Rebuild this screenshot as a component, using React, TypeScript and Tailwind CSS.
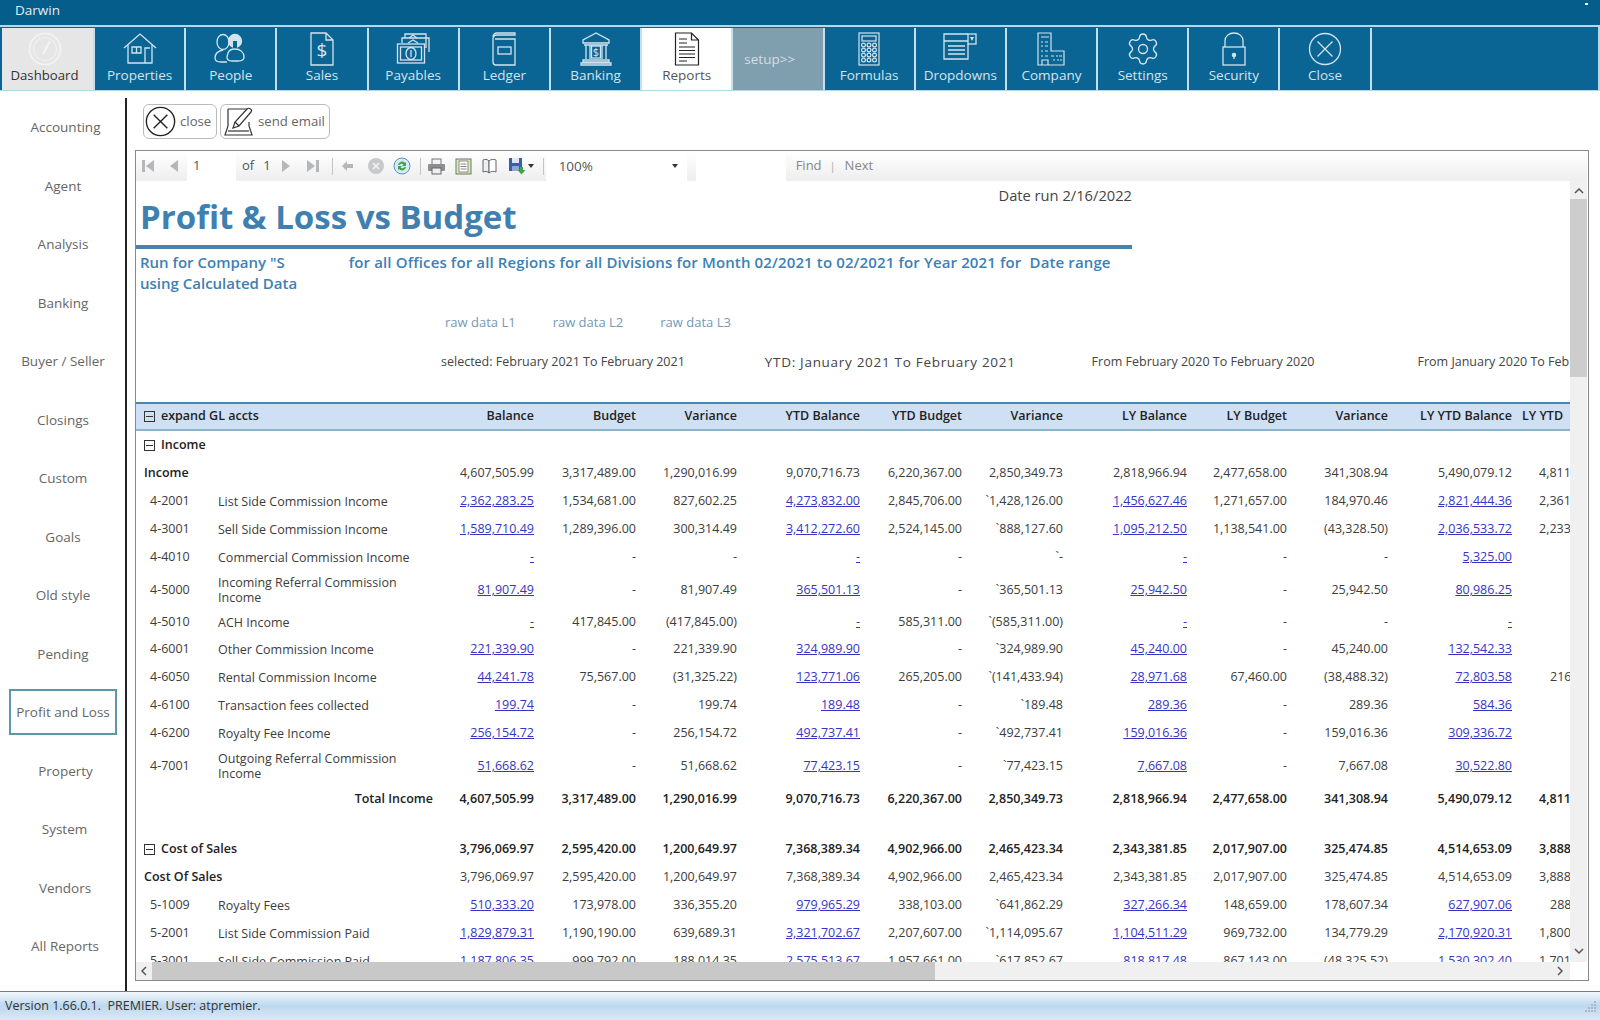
import { ReactNode } from "react";
import { Settings } from "lucide-react";

const font = "font-['Open_Sans',sans-serif]";

const sideItems = [
  { label: "Accounting", cls: "pl-[5px]" },
  { label: "Agent", cls: "" },
  { label: "Analysis", cls: "" },
  { label: "Banking", cls: "" },
  { label: "Buyer / Seller", cls: "" },
  { label: "Closings", cls: "" },
  { label: "Custom", cls: "" },
  { label: "Goals", cls: "" },
  { label: "Old style", cls: "" },
  { label: "Pending", cls: "" },
  { label: "Profit and Loss", cls: "" },
  { label: "Property", cls: "pl-[5px]" },
  { label: "System", cls: "pl-[3px]" },
  { label: "Vendors", cls: "pl-[4px]" },
  { label: "All Reports", cls: "pl-[4px]" },
];

const HouseIcon = () => (
  <svg width="36" height="32" viewBox="0 0 36 32" fill="none" stroke="currentColor" strokeWidth="1.3">
    <path d="M2 15 18 1l16 14" />
    <path d="M6 12v18h24V12" />
    <path d="M10 14h9v6h-9z M23 30V15h5" />
    <path d="M14.5 14v6" />
  </svg>
);

const PeopleIcon = () => (
  <svg width="36" height="32" viewBox="0 0 36 32" fill="none" stroke="currentColor" strokeWidth="1.3">
    <ellipse cx="10" cy="9" rx="6" ry="7.5" />
    <path d="M10 17c-5 1-8 4-8 8 0 3 3 4 6 4h6" />
    <circle cx="22" cy="8" r="6.5" fill="currentColor" />
    <path d="M20 8h4v10h-4z" fill="#0b6594" stroke="none" />
    <path d="M15 20c1-3 4-4 7-4 5 0 9 3 9 8 0 3-3 4-6 4h-6c-3 0-5-1-5-4z" />
  </svg>
);

const SalesIcon = () => (
  <svg width="28" height="34" viewBox="0 0 28 34" fill="none" stroke="currentColor" strokeWidth="1.3">
    <path d="M3 1h15l7 7v25H3z M18 1v7h7" />
    <text x="14" y="25" textAnchor="middle" fontSize="19" fill="currentColor" stroke="none" fontFamily="Open Sans">$</text>
  </svg>
);

const PayablesIcon = () => (
  <svg width="34" height="32" viewBox="0 0 34 32" fill="none" stroke="currentColor" strokeWidth="1.3">
    <path d="M9 5V1h21v14M6 10V5h27v14" />
    <path d="M13 5l4-3 4 3M12 10l5-3 5 3" />
    <rect x="1.5" y="11" width="27" height="19" />
    <rect x="4.5" y="14" width="21" height="13" />
    <ellipse cx="15" cy="20.5" rx="5" ry="6" />
    <path d="M15 17v7" />
  </svg>
);

const LedgerIcon = () => (
  <svg width="26" height="34" viewBox="0 0 26 34" fill="none" stroke="currentColor" strokeWidth="1.3">
    <path d="M2 5c0-3 2-4 4-4h18v2H6C3 3 2 5 2 7v23c0 2 1 3 3 3h19V7H4" />
    <rect x="7" y="15" width="13" height="7" />
  </svg>
);

const BankIcon = () => (
  <svg width="32" height="34" viewBox="0 0 32 34" fill="none" stroke="currentColor" strokeWidth="1.3">
    <path d="M16 1 3 8v3h26V8z" />
    <path d="M4 13h24 M6 13v14M10 13v14M22 13v14M26 13v14" />
    <rect x="11.5" y="14" width="9" height="12" />
    <path d="M3 28h26v2H3z M1 31h30v2H1z" />
    <text x="16" y="24" textAnchor="middle" fontSize="11" fill="currentColor" stroke="none" fontFamily="Open Sans">$</text>
  </svg>
);

const ReportIcon = () => (
  <svg width="26" height="34" viewBox="0 0 26 34" fill="none" stroke="#222" strokeWidth="1.2">
    <path d="M1.5 1h16l7 7v25h-23z M17.5 1v7h7" />
    <path d="M5 7h8M5 11h8M5 15h16M5 18.5h16M5 22h16M5 25.5h16M5 29h8" />
  </svg>
);

const CalcIcon = () => (
  <svg width="22" height="34" viewBox="0 0 22 34" fill="none" stroke="currentColor" strokeWidth="1.2">
    <rect x="1" y="1" width="20" height="32" />
    <rect x="4" y="4" width="14" height="5" />
    {[13, 18, 23, 28].map((y) =>
      [5.5, 11, 16.5].map((x) => <circle key={`${x}-${y}`} cx={x} cy={y} r="1.9" />)
    )}
  </svg>
);

const DropdownIcon = () => (
  <svg width="34" height="32" viewBox="0 0 34 32" fill="none" stroke="currentColor" strokeWidth="1.3">
    <path d="M25 1H1v25h24V11" />
    <rect x="25" y="1" width="8" height="10" />
    <path d="M27 4h4l-2 4z" fill="currentColor" stroke="none" />
    <path d="M1 8h24M5 13h17M5 17h17M5 21h17" />
  </svg>
);

const CompanyIcon = () => (
  <svg width="28" height="34" viewBox="0 0 28 34" fill="none" stroke="currentColor" strokeWidth="1.2">
    <path d="M1 33V1h13v18h13v14z" />
    <path d="M4 5h8M4 10h2m2 0h3M4 14h2m2 0h3M4 19h2m2 0h3M4 24h2m2 0h3M14 24h3m2 0h2m1 0h3M16 28h2m2 0h2m1 0h2" />
    <path d="M5 33v-5h6v5" />
  </svg>
);

const LockIcon = () => (
  <svg width="26" height="34" viewBox="0 0 26 34" fill="none" stroke="currentColor" strokeWidth="1.3">
    <path d="M4 15V9c0-5 4-8 9-8s9 3 9 8v6" />
    <rect x="2" y="15" width="22" height="18" />
    <circle cx="13" cy="23" r="1.6" fill="currentColor" />
    <path d="M13 23v4" />
  </svg>
);

const XCircleIcon = ({ size = 34, width = 1.3 }: { size?: number; width?: number }) => (
  <svg width={size} height={size} viewBox="0 0 34 34" fill="none" stroke="currentColor" strokeWidth={width}>
    <circle cx="17" cy="17" r="15.5" />
    <path d="M9.5 9.5l15 15M24.5 9.5l-15 15" />
  </svg>
);

const GaugeIcon = () => (
  <svg width="34" height="34" viewBox="0 0 34 34" fill="none" stroke="#f4f4f4" strokeWidth="1.6">
    <circle cx="17" cy="17" r="15.5" />
    <circle cx="17" cy="17" r="11.5" strokeWidth="1" />
    <path d="M15 22 22 9" strokeWidth="2" />
  </svg>
);

const tabs: { label: string; icon: ReactNode; kind?: string }[] = [
  { label: "Dashboard", icon: <GaugeIcon />, kind: "dash" },
  { label: "Properties", icon: <HouseIcon /> },
  { label: "People", icon: <PeopleIcon /> },
  { label: "Sales", icon: <SalesIcon /> },
  { label: "Payables", icon: <PayablesIcon /> },
  { label: "Ledger", icon: <LedgerIcon /> },
  { label: "Banking", icon: <BankIcon /> },
  { label: "Reports", icon: <ReportIcon />, kind: "active" },
  { label: "setup>>", icon: null, kind: "setup" },
  { label: "Formulas", icon: <CalcIcon /> },
  { label: "Dropdowns", icon: <DropdownIcon /> },
  { label: "Company", icon: <CompanyIcon /> },
  { label: "Settings", icon: <Settings size={36} strokeWidth={0.9} /> },
  { label: "Security", icon: <LockIcon /> },
  { label: "Close", icon: <XCircleIcon /> },
];

const NavTab = ({ label, icon, kind }: { label: string; icon: ReactNode; kind?: string }) => {
  if (kind === "setup") {
    return (
      <div className="w-[91.2px] h-full border-r-2 border-[#c4e0ec] bg-[#7f9fae] text-[#d4dee4] text-[13.5px] flex items-center pl-[11px]">
        {label}
      </div>
    );
  }
  const tone =
    kind === "dash"
      ? "w-[93px] bg-[#e6e6e6] text-[#333333] pr-[6px]"
      : kind === "active"
      ? "w-[91.2px] bg-white text-[#555555]"
      : "w-[91.2px] bg-[#0b6594] text-[#d3e3ec]";
  return (
    <div className={`${tone} h-full border-r-2 border-[#c4e0ec] flex flex-col items-center`}>
      <div className="h-[38px] pt-[3px] flex items-center justify-center">{icon}</div>
      <div className={`${kind === "dash" ? "text-[13.2px]" : "text-[13.5px]"} leading-[18px]`}>{label}</div>
    </div>
  );
};

type Cell = string;
type Row = {
  code?: string;
  name?: string;
  cells?: Cell[];
  last?: string;
  kind?: string;
};

// "L" up front marks a link cell
const rows: Row[] = [
  { name: "Income", kind: "section" },
  { name: "Income", kind: "group", cells: ["4,607,505.99", "3,317,489.00", "1,290,016.99", "9,070,716.73", "6,220,367.00", "2,850,349.73", "2,818,966.94", "2,477,658.00", "341,308.94", "5,490,079.12"], last: "4,811" },
  { code: "4-2001", name: "List Side Commission Income", cells: ["L2,362,283.25", "1,534,681.00", "827,602.25", "L4,273,832.00", "2,845,706.00", "`1,428,126.00", "L1,456,627.46", "1,271,657.00", "184,970.46", "L2,821,444.36"], last: "2,361" },
  { code: "4-3001", name: "Sell Side Commission Income", cells: ["L1,589,710.49", "1,289,396.00", "300,314.49", "L3,412,272.60", "2,524,145.00", "`888,127.60", "L1,095,212.50", "1,138,541.00", "(43,328.50)", "L2,036,533.72"], last: "2,233" },
  { code: "4-4010", name: "Commercial Commission Income", cells: ["L-", "-", "-", "L-", "-", "`-", "L-", "-", "-", "L5,325.00"] },
  { code: "4-5000", name: "Incoming Referral Commission Income", kind: "tall", cells: ["L81,907.49", "-", "81,907.49", "L365,501.13", "-", "`365,501.13", "L25,942.50", "-", "25,942.50", "L80,986.25"] },
  { code: "4-5010", name: "ACH Income", kind: "short", cells: ["L-", "417,845.00", "(417,845.00)", "L-", "585,311.00", "`(585,311.00)", "L-", "-", "-", "L-"] },
  { code: "4-6001", name: "Other Commission Income", cells: ["L221,339.90", "-", "221,339.90", "L324,989.90", "-", "`324,989.90", "L45,240.00", "-", "45,240.00", "L132,542.33"] },
  { code: "4-6050", name: "Rental Commission Income", cells: ["L44,241.78", "75,567.00", "(31,325.22)", "L123,771.06", "265,205.00", "`(141,433.94)", "L28,971.68", "67,460.00", "(38,488.32)", "L72,803.58"], last: "216" },
  { code: "4-6100", name: "Transaction fees collected", cells: ["L199.74", "-", "199.74", "L189.48", "-", "`189.48", "L289.36", "-", "289.36", "L584.36"] },
  { code: "4-6200", name: "Royalty Fee Income", cells: ["L256,154.72", "-", "256,154.72", "L492,737.41", "-", "`492,737.41", "L159,016.36", "-", "159,016.36", "L309,336.72"] },
  { code: "4-7001", name: "Outgoing Referral Commission Income", kind: "tall", cells: ["L51,668.62", "-", "51,668.62", "L77,423.15", "-", "`77,423.15", "L7,667.08", "-", "7,667.08", "L30,522.80"] },
  { name: "Total Income", kind: "total", cells: ["4,607,505.99", "3,317,489.00", "1,290,016.99", "9,070,716.73", "6,220,367.00", "2,850,349.73", "2,818,966.94", "2,477,658.00", "341,308.94", "5,490,079.12"], last: "4,811" },
  { kind: "spacer" },
  { name: "Cost of Sales", kind: "sectionTotal", cells: ["3,796,069.97", "2,595,420.00", "1,200,649.97", "7,368,389.34", "4,902,966.00", "2,465,423.34", "2,343,381.85", "2,017,907.00", "325,474.85", "4,514,653.09"], last: "3,888" },
  { name: "Cost Of Sales", kind: "group", cells: ["3,796,069.97", "2,595,420.00", "1,200,649.97", "7,368,389.34", "4,902,966.00", "2,465,423.34", "2,343,381.85", "2,017,907.00", "325,474.85", "4,514,653.09"], last: "3,888" },
  { code: "5-1009", name: "Royalty Fees", cells: ["L510,333.20", "173,978.00", "336,355.20", "L979,965.29", "338,103.00", "`641,862.29", "L327,266.34", "148,659.00", "178,607.34", "L627,907.06"], last: "288" },
  { code: "5-2001", name: "List Side Commission Paid", cells: ["L1,829,879.31", "1,190,190.00", "639,689.31", "L3,321,702.67", "2,207,607.00", "`1,114,095.67", "L1,104,511.29", "969,732.00", "134,779.29", "L2,170,920.31"], last: "1,800" },
  { code: "5-3001", name: "Sell Side Commission Paid", cells: ["L1,187,806.35", "999,792.00", "188,014.35", "L2,575,513.67", "1,957,661.00", "`617,852.67", "L818,817.48", "867,143.00", "(48,325.52)", "L1,530,302.40"], last: "1,701" },
];

const gridCols =
  "grid grid-cols-[82px_217px_99px_102px_101px_123px_102px_101px_124px_100px_101px_124px_100px] items-center";

const MinusBox = () => (
  <span className="w-[11px] h-[11px] border border-[#333] flex items-center justify-center shrink-0">
    <span className="w-[7px] h-px bg-[#333]" />
  </span>
);

const ValueCell = ({ value, bold }: { value: string; bold: boolean }) => {
  const isLink = value.startsWith("L");
  const text = isLink ? value.slice(1) : value;
  if (isLink) {
    return (
      <div className="text-right">
        <span className="text-[#3535c4] underline">{text}</span>
      </div>
    );
  }
  return <div className={`text-right ${bold ? "font-semibold text-[#222222]" : ""}`}>{text}</div>;
};

const ReportRow = ({ row }: { row: Row }) => {
  if (row.kind === "spacer") return <div className="h-[22px]" />;
  const bold = row.kind === "total" || row.kind === "sectionTotal";
  const height = row.kind === "tall" ? "h-[38px]" : row.kind === "short" ? "h-[26px]" : "h-[28px]";
  let label: ReactNode;
  if (row.kind === "section" || row.kind === "sectionTotal") {
    label = (
      <div className="col-span-2 flex items-center gap-[6px] pl-[8px] font-semibold text-[#222222]">
        <MinusBox />
        <span>{row.name}</span>
      </div>
    );
  } else if (row.kind === "group") {
    label = <div className="col-span-2 pl-[8px] font-semibold text-[#222222]">{row.name}</div>;
  } else if (row.kind === "total") {
    label = <div className="col-span-2 pr-[2px] text-right font-semibold text-[#222222]">{row.name}</div>;
  } else {
    label = (
      <>
        <div className="pl-[14px]">{row.code}</div>
        <div className="pr-[8px] leading-[15px]">{row.name}</div>
      </>
    );
  }
  return (
    <div className={`${gridCols} ${height}`}>
      {label}
      {row.cells?.map((c, i) => (
        <ValueCell key={i} value={c} bold={bold} />
      ))}
      {row.last && (
        <div className={`${row.last.length > 3 ? "pl-[27px]" : "pl-[38px]"} ${bold ? "font-semibold text-[#222222]" : ""}`}>
          {row.last}
        </div>
      )}
    </div>
  );
};

const headers = ["Balance", "Budget", "Variance", "YTD Balance", "YTD Budget", "Variance", "LY Balance", "LY Budget", "Variance", "LY YTD Balance"];

const Toolbar = () => (
  <div className="h-[30px] shrink-0 flex items-center text-[13px] text-[#555555] bg-gradient-to-b from-[#ffffff] to-[#eeeeee]">
    <svg className="ml-[5px]" width="14" height="14" viewBox="0 0 14 14" fill="#b4b8bc"><rect x="1" y="1" width="3" height="12" /><path d="M13 1v12L5 7z" /></svg>
    <svg className="ml-[14px]" width="10" height="14" viewBox="0 0 10 14" fill="#b4b8bc"><path d="M9 1v12L1 7z" /></svg>
    <div className="ml-[8px] w-[49px] h-full bg-white pl-[6px] flex items-center">1</div>
    <span className="ml-[6px]">of</span>
    <span className="ml-[9px]">1</span>
    <svg className="ml-[10px]" width="10" height="14" viewBox="0 0 10 14" fill="#b4b8bc"><path d="M1 1v12l8-6z" /></svg>
    <svg className="ml-[15px]" width="14" height="14" viewBox="0 0 14 14" fill="#b4b8bc"><path d="M1 1v12l8-6z" /><rect x="10" y="1" width="3" height="12" /></svg>
    <div className="ml-[12px] w-px h-[17px] bg-[#c4c4c4]" />
    <svg className="ml-[8px]" width="13" height="12" viewBox="0 0 13 12" fill="#b4b8bc"><path d="M6 1v3h6v4H6v3L1 6z" /></svg>
    <svg className="ml-[13px]" width="18" height="18" viewBox="0 0 18 18"><circle cx="9" cy="9" r="8" fill="#c6cacd" /><path d="M6 6l6 6M12 6l-6 6" stroke="#f3f3f3" strokeWidth="1.6" /></svg>
    <svg className="ml-[8px]" width="18" height="18" viewBox="0 0 18 18" fill="none"><circle cx="9" cy="9" r="8" fill="#d7e9f7" stroke="#5b92c2" /><path d="M5 8a4 4 0 0 1 7-2l1-1v4H9l1.5-1.5A2.5 2.5 0 0 0 6.500 8z" fill="#3fa544" /><path d="M13 10a4 4 0 0 1-7 2l-1 1V9h4l-1.500 1.500A2.500 2.500 0 0 0 11.500 10z" fill="#3fa544" /></svg>
    <div className="ml-[9px] w-px h-[17px] bg-[#c4c4c4]" />
    <svg className="ml-[6px]" width="19" height="17" viewBox="0 0 19 17"><rect x="5" y="1" width="9" height="6" fill="#f4f4f4" stroke="#777" /><rect x="1" y="6" width="17" height="7" rx="1" fill="#8b8f94" /><rect x="5" y="10" width="9" height="6" fill="#eeeeee" stroke="#666" /></svg>
    <svg className="ml-[9px]" width="17" height="17" viewBox="0 0 17 17"><rect x="1" y="1" width="15" height="15" fill="#dfe8b8" stroke="#5f7f66" /><rect x="4" y="3" width="9" height="11" fill="#ffffff" stroke="#8a8a8a" /><path d="M5.500 6h6M5.500 8.500h6M5.500 11h6" stroke="#888" /></svg>
    <svg className="ml-[9px]" width="17" height="16" viewBox="0 0 17 16" fill="#e9f0f6" stroke="#666"><path d="M2 2c2-1 4-1 6 1v12c-2-2-4-2-6-1z" /><path d="M8 3c2-2 5-2 7-1v12c-2-1-5-1-7 1z" fill="#ffffff" /></svg>
    <svg className="ml-[10px]" width="18" height="18" viewBox="0 0 18 18"><rect x="1" y="1" width="13" height="13" fill="#3c5fa8" /><rect x="4" y="1" width="7" height="5" fill="#dfe7f3" /><rect x="4" y="9" width="7" height="5" fill="#8ea7d4" /><path d="M12 10h3v3h2.500l-4 4.500-4-4.500H12z" fill="#3fa544" /></svg>
    <svg className="ml-[2px]" width="6" height="4" viewBox="0 0 6 4" fill="#333"><path d="M0 0h6L3 4z" /></svg>
    <div className="ml-[9px] w-px h-[17px] bg-[#c4c4c4]" />
    <div className="ml-[2px] w-[141px] h-full bg-white flex items-center justify-between pl-[13px] pr-[9px] text-[13.5px]">
      <span>100%</span>
      <svg width="6" height="4" viewBox="0 0 6 4" fill="#333"><path d="M0 0h6L3 4z" />
      </svg>
    </div>
    <div className="ml-[9px] w-[90px] h-full bg-white" />
    <span className="ml-[10px] text-[#888888]">Find</span>
    <span className="ml-[8px] text-[#aaaaaa] text-[11px]">|</span>
    <span className="ml-[9px] text-[#888888]">Next</span>
  </div>
);

const App = () => {
  return (
    <div className={`w-[1600px] h-[1020px] flex flex-col overflow-hidden bg-white ${font}`}>
      <div className="h-[25px] shrink-0 bg-[#045d8a] flex items-start justify-between pl-[15px] pr-[12px] text-[13.5px] leading-[20px] text-[#e4edf2]">
        <span>Darwin</span>
        <span className="mt-[3px] w-[3px] h-[2px] bg-white" />
      </div>

      <div className="h-[66px] shrink-0 bg-[#0b6594] border-t-2 border-b border-r-2 border-[#b5d8e8] pl-[2px] pt-[1px] flex">
        {tabs.map((t) => (
          <NavTab key={t.label} {...t} />
        ))}
      </div>

      <div className="flex-1 min-h-0 flex pt-[7px]">
        <div className="w-[127px] shrink-0 border-r-2 border-[#222222] pl-[9px] pr-[8px] text-[13.5px] text-[#666666]">
          {sideItems.map((item) => (
            <div key={item.label} className="h-[58.5px] flex items-center justify-center">
              {item.label === "Profit and Loss" ? (
                <div className="w-full h-[46px] border-2 border-[#5f97a6] flex items-center justify-center">{item.label}</div>
              ) : (
                <span className={item.cls}>{item.label}</span>
              )}
            </div>
          ))}
        </div>

        <div className="flex-1 min-w-0 pl-[8px] pr-[11px] flex flex-col pb-[10px]">
          <div className="h-[52px] shrink-0 pl-[8px] pt-[6px] flex gap-[3px] text-[13.2px] text-[#666666]">
            <div className="w-[74px] h-[35px] border border-[#bbbbbb] rounded-[6px] flex items-center gap-[4px] pl-[1px]">
              <span className="text-[#222222]">
                <XCircleIcon size={31} width={1.5} />
              </span>
              close
            </div>
            <div className="w-[110px] h-[35px] border border-[#bbbbbb] rounded-[6px] flex items-center gap-[3px] pl-[2px]">
              <svg width="32" height="32" viewBox="0 0 32 32" fill="none" stroke="#333333" strokeWidth="1.2">
                <path d="M5 3h19v6 M5 3v17l-3 9h27l-3-9v-4" />
                <path d="M5 25h21" />
                <path d="M10 22l2-6L24 3c2-2 6 1 4 3L16 20z" fill="#ffffff" />
                <path d="M12 16l4 4" />
              </svg>
              send email
            </div>
          </div>

          <div className="flex-1 min-h-0 border border-[#888888] flex flex-col pr-[1px]">
            <Toolbar />
            <div className="flex-1 min-h-0 flex flex-col">
              <div className="flex-1 min-h-0 flex">
                <div className="flex-1 min-w-0 overflow-hidden text-[12.5px] text-[#3c3c3c]">
                  <div className="mt-[4px] w-[996px] h-[20px] text-right text-[14.7px] text-[#444444] leading-[20px]">Date run 2/16/2022</div>
                  <div className="h-[40px] pl-[4px] text-[33px] leading-[24px] font-bold text-[#3f80b0] whitespace-nowrap">Profit &amp; Loss vs Budget</div>
                  <div className="w-[996px] h-[4px] bg-[#4a82ad]" />
                  <div className="mt-[3px] w-[996px] pl-[4px] text-[15px] leading-[20.5px] font-semibold text-[#3c80b5]">
                    <div className="whitespace-nowrap">
                      <span>Run for Company "S</span>
                      <span className="ml-[64px] tracking-[0.13px]">for all Offices for all Regions for all Divisions for Month 02/2021 to 02/2021 for Year 2021 for&nbsp; Date range</span>
                    </div>
                    <div>using Calculated Data</div>
                  </div>
                  <div className="mt-[20px] h-[20px] pl-[309px] flex items-center gap-[37px] text-[#7399b3] text-[13px]">
                    <span>raw data L1</span>
                    <span>raw data L2</span>
                    <span>raw data L3</span>
                  </div>
                  <div className="mt-[19px] h-[20px] flex items-center text-[#444444] text-[12.5px] whitespace-nowrap">
                    <span className="ml-[305px]">selected: February 2021 To February 2021</span>
                    <span className="ml-[80px] text-[13.5px] tracking-[0.7px]">YTD: January 2021 To February 2021</span>
                    <span className="ml-[76px]">From February 2020 To February 2020</span>
                    <span className="ml-[103px]">From January 2020 To February 2020</span>
                  </div>
                  <div className={`mt-[30px] ${gridCols} h-[29px] bg-[#cfe0f5] border-t-2 border-b-2 border-t-[#4a85ad] border-b-[#8fb2cc] font-semibold text-[#222222]`}>
                    <div className="col-span-2 flex items-center gap-[6px] pl-[8px]">
                      <MinusBox />
                      <span>expand GL accts</span>
                    </div>
                    {headers.map((h, i) => (
                      <div key={i} className="text-right">{h}</div>
                    ))}
                    <div className="pl-[10px] whitespace-nowrap">LY YTD</div>
                  </div>
                  {rows.map((r, i) => (
                    <ReportRow key={i} row={r} />
                  ))}
                </div>

                <div className="w-[17px] shrink-0 bg-[#f0f0f0] flex flex-col items-center">
                  <svg className="mt-[7px] shrink-0" width="10" height="6" viewBox="0 0 10 6" fill="none" stroke="#555" strokeWidth="1.5"><path d="M1 5l4-4 4 4" /></svg>
                  <div className="mt-[5px] w-full h-[178px] bg-[#cdcdcd]" />
                  <svg className="mt-auto mb-[8px] shrink-0" width="10" height="6" viewBox="0 0 10 6" fill="none" stroke="#555" strokeWidth="1.5"><path d="M1 1l4 4 4-4" /></svg>
                </div>
              </div>
              <div className="h-[18px] shrink-0 flex items-center mr-[17px] bg-[#f0f0f0]">
                <svg className="ml-[5px] shrink-0" width="6" height="10" viewBox="0 0 6 10" fill="none" stroke="#555" strokeWidth="1.5"><path d="M5 1 1 5l4 4" /></svg>
                <div className="ml-[5px] w-[783px] h-full bg-[#c8c8c8]" />
                <svg className="ml-auto mr-[7px] shrink-0" width="6" height="10" viewBox="0 0 6 10" fill="none" stroke="#555" strokeWidth="1.5"><path d="M1 1l4 4-4 4" /></svg>
              </div>
            </div>
          </div>
        </div>
      </div>

      <div className="h-[29px] shrink-0 border-t border-[#4d8a9c] bg-gradient-to-b from-[#f2f8fc] via-[#bcd7ee] to-[#dbe9f7] flex items-center justify-between pl-[5px] pr-[3px] text-[12.5px] text-[#333333]">
        <span>Version 1.66.0.1.&nbsp; PREMIER. User: atpremier.</span>
        <svg width="14" height="14" viewBox="0 0 14 14" fill="#a9b9c6">
          {[[11, 2], [8, 5], [11, 5], [5, 8], [8, 8], [11, 8], [2, 11], [5, 11], [8, 11], [11, 11]].map(([x, y]) => (
            <rect key={`${x}-${y}`} x={x} y={y} width="2" height="2" />
          ))}
        </svg>
      </div>
    </div>
  );
};

export default App;
